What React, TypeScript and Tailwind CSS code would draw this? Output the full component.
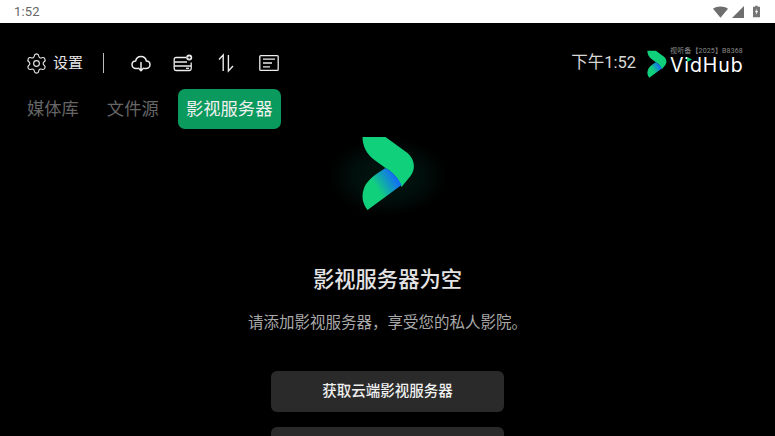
import { Settings } from "lucide-react";

const cjk = "font-['Roboto','Noto_Sans_CJK_SC',sans-serif]";

function LogoMark({ width, height, viewBox, id }: { width: number; height: number; viewBox: string; id: string }) {
  return (
    <svg width={width} height={height} viewBox={viewBox} className="shrink-0 block">
      <defs>
        <linearGradient id={`${id}b`} x1="365" y1="195" x2="402" y2="172" gradientUnits="userSpaceOnUse">
          <stop offset="0.3" stopColor="#11d07c" />
          <stop offset="0.78" stopColor="#1273f0" />
          <stop offset="1" stopColor="#2a50ff" />
        </linearGradient>
      </defs>
      <path
        d="M362 137 L385 137 L407 153 C415 160 415 170 410 176 L401 187 C398 178 392 172 385 168 L374 160 C366 154 362 146 362 137 Z"
        fill="#11d07c"
      />
      <path
        d="M385 168 C392 172 398 178 401 185 L367 210 C362 203 361 197 363 190 C365 182 372 176 385 168 Z"
        fill={`url(#${id}b)`}
      />
    </svg>
  );
}

export default function App() {
  return (
    <div className={`w-[775px] h-[436px] overflow-hidden bg-black flex flex-col ${cjk}`}>
      <div className="h-[23px] shrink-0 bg-white flex items-center justify-between pl-[14px] pr-[15px]">
        <span className="text-[13px] leading-none text-[#666666] tracking-[0.2px]">1:52</span>
        <div className="flex items-center gap-[3px]">
          <svg width="15" height="12" viewBox="0 0 16 12">
            <path d="M0 2.5 C4.5 -0.8 11.5 -0.8 16 2.5 L8 12 Z" fill="#6e6e6e" />
          </svg>
          <svg width="12" height="12" viewBox="0 0 12 12" className="ml-px">
            <path d="M12 0 V12 H0 Z" fill="#6e6e6e" />
          </svg>
          <svg width="7" height="13" viewBox="0 0 8 13" className="ml-[6px]">
            <path d="M2.5 0 H5.5 V1 H8 V13 H0 V1 H2.5 Z" fill="#757575" />
            <path d="M4.6 3 L2.2 7.4 H3.8 L3.2 10.6 L5.8 6 H4.2 Z" fill="#fff" />
          </svg>
        </div>
      </div>

      <div className="mt-[20px] h-10 shrink-0 flex items-center pl-[27px] pr-[31px] text-[#e6e6e6]">
        <Settings size={23} strokeWidth={1.2} className="ml-[-2px]" />
        <span className="ml-[5px] text-[15px] leading-none">设置</span>
        <div className="ml-5 w-px h-5 bg-[#bdbdbd]" />
        <svg width="20" height="20" viewBox="0 0 20 20" fill="none" stroke="#ececec" strokeWidth="1.5" className="ml-[27px]" strokeLinecap="round" strokeLinejoin="round">
          <path d="M6.5 15.5 H5 C2.8 15.5 1 13.8 1 11.7 C1 9.7 2.6 8.1 4.6 8 C5.2 5.4 7.4 3.5 10 3.5 C12.6 3.5 14.8 5.4 15.4 8 C17.4 8.1 19 9.7 19 11.7 C19 13.8 17.2 15.5 15 15.5 H13.5" />
          <path d="M10 9.5 V17.5 M7.6 15.2 L10 17.8 L12.4 15.2" />
        </svg>
        <svg width="20" height="20" viewBox="0 0 20 20" fill="none" stroke="#ececec" strokeWidth="1.3" className="ml-[22px]">
          <path d="M13 4.5 H3 C2 4.5 1.2 5.3 1.2 6.3 V15.8 C1.2 16.8 2 17.5 3 17.5 H16.5 C17.5 17.5 18.2 16.8 18.2 15.8 V9.5" />
          <path d="M1.2 9 H14 M1.2 13 H18.2" />
          <path d="M13 15.3 H16" />
          <circle cx="16.2" cy="4.6" r="3" fill="#ececec" stroke="none" />
          <path d="M16.2 3 V6.2 M14.6 4.6 H17.8" stroke="#000" strokeWidth="0.8" />
        </svg>
        <svg width="16" height="20" viewBox="0 0 16 20" fill="none" stroke="#ececec" strokeWidth="1.4" className="ml-[25px]">
          <path d="M1 6.5 L5.2 2 V18" />
          <path d="M10.4 2 V18 L15 13" />
        </svg>
        <svg width="20" height="18" viewBox="0 0 20 18" fill="none" stroke="#ececec" strokeWidth="1.3" className="ml-[25px]">
          <rect x="0.8" y="1.6" width="18.4" height="14.8" rx="1" />
          <path d="M4 5.2 H16 M4 9 H13 M4 12.8 H11" />
        </svg>

        <span className="ml-auto text-[16.5px] leading-none text-[#d8d8d8]">下午1:52</span>
        <div className="ml-[11px] flex items-start">
          <div className="mt-[3px]">
            <LogoMark width={20} height={29} viewBox="361 137 54 74" id="s" />
          </div>
          <div className="relative ml-[3px] w-[74px] flex flex-col items-start mb-[3px]">
            <span className="text-[7px] leading-[8px] text-[#8a8a8a] whitespace-nowrap tracking-[0.15px]">视听备【2025】B8368</span>
            <span className="font-['Inter',sans-serif] text-[19.5px] leading-[20px] text-white tracking-[0.9px]">VidHub</span>
            <svg width="5" height="5" viewBox="0 0 5 5" className="absolute left-[17px] top-[10px]">
              <path d="M0 0 L5 2.5 L0 5 Z" fill="#11d07c" />
            </svg>
          </div>
        </div>
      </div>

      <div className="mt-[6px] h-10 shrink-0 flex items-center pl-[27px] text-[17.3px] leading-none text-[#666666]">
        <span className="pt-[2px]">媒体库</span>
        <span className="ml-7 pt-[2px]">文件源</span>
        <span className="ml-[19px] h-10 w-[103px] rounded-[7px] bg-[#0a9a5d] text-[#f0f0f0] flex items-center justify-center pt-px">影视服务器</span>
      </div>

      <div className="mt-2 h-[88px] shrink-0 flex justify-center">
        <div className="w-[120px] h-[88px] bg-[radial-gradient(closest-side_at_50%_45%,#02150e_0%,#010f0c_55%,#000000_100%)]">
          <LogoMark width={120} height={88} viewBox="327.5 137 120 88" id="b" />
        </div>
      </div>

      <h1 className="mt-10 h-[30px] shrink-0 text-center text-[21.3px] leading-[30px] font-medium text-[#e4e4e4]">影视服务器为空</h1>
      <p className="mt-4 h-6 shrink-0 text-center text-[15.5px] leading-6 text-[#a8a8a8]">请添加影视服务器，享受您的私人影院。</p>

      <div className="mt-9 flex flex-col items-center gap-[15px] shrink-0">
        <button className="w-[233px] h-[41px] rounded-md bg-[#2a2a2a] text-[14.5px] font-medium text-[#f0f0f0]">获取云端影视服务器</button>
        <button className="w-[233px] h-[41px] rounded-md bg-[#2a2a2a]" aria-label="添加影视服务器" />
      </div>
    </div>
  );
}
